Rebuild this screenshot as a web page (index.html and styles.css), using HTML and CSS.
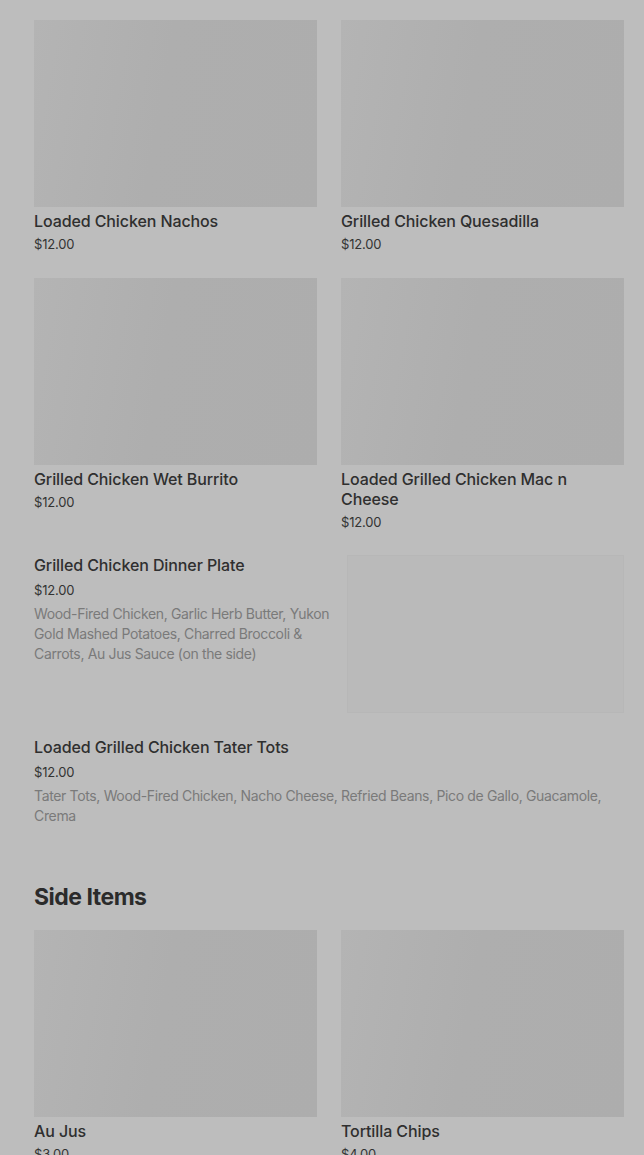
FILE: index.html
```html
<!DOCTYPE html>
<html lang="en">
<head>
    <meta charset="UTF-8">
    <meta name="viewport" content="width=device-width, initial-scale=1.0">
    <title>Menu</title>
    <link rel="stylesheet" href="styles.css">
</head>
<body>
    <div class="menu">
        <div class="grid">
            <div class="card">
                <div class="thumb"></div>
                <div class="item-name">Loaded Chicken Nachos</div>
                <div class="item-price">$12.00</div>
            </div>
            <div class="card">
                <div class="thumb"></div>
                <div class="item-name">Grilled Chicken Quesadilla</div>
                <div class="item-price">$12.00</div>
            </div>
            <div class="card">
                <div class="thumb"></div>
                <div class="item-name">Grilled Chicken Wet Burrito</div>
                <div class="item-price">$12.00</div>
            </div>
            <div class="card">
                <div class="thumb"></div>
                <div class="item-name">Loaded Grilled Chicken Mac n Cheese</div>
                <div class="item-price">$12.00</div>
            </div>
        </div>

        <div class="row-item">
            <div class="row-text">
                <div class="item-name">Grilled Chicken Dinner Plate</div>
                <div class="item-price spaced">$12.00</div>
                <div class="item-desc">Wood-Fired Chicken, Garlic Herb Butter, Yukon Gold Mashed Potatoes, Charred Broccoli &amp; Carrots, Au Jus Sauce (on the side)</div>
            </div>
            <div class="row-thumb"></div>
        </div>

        <div class="row-item">
            <div class="row-text">
                <div class="item-name">Loaded Grilled Chicken Tater Tots</div>
                <div class="item-price spaced">$12.00</div>
                <div class="item-desc">Tater Tots, Wood-Fired Chicken, Nacho Cheese, Refried Beans, Pico de Gallo, Guacamole, Crema</div>
            </div>
        </div>

        <h2 class="section-title">Side Items</h2>
        <div class="grid">
            <div class="card">
                <div class="thumb"></div>
                <div class="item-name">Au Jus</div>
                <div class="item-price">$3.00</div>
            </div>
            <div class="card">
                <div class="thumb"></div>
                <div class="item-name">Tortilla Chips</div>
                <div class="item-price">$4.00</div>
            </div>
        </div>
    </div>
</body>
</html>
```

FILE: styles.css
```css
body {
    margin: 0;
    background: #bdbdbd;
    font-family: Inter, "Noto Sans", sans-serif;
    color: #2e2e2e;
}
.menu {
    padding: 20px 20px 40px 34px;
}
.grid {
    display: grid;
    grid-template-columns: 1fr 1fr;
    column-gap: 24px;
    row-gap: 24px;
}
.thumb {
    height: 187px;
    background: linear-gradient(100deg, #b4b4b4, #aeaeae 45%, #adadad);
    margin-bottom: 4px;
}
.item-name {
    font-size: 16px;
    line-height: 20px;
    font-weight: 500;
    letter-spacing: -0.1px;
    color: #2f2f2f;
}
.item-price {
    font-size: 13px;
    line-height: 20px;
    margin-top: 3px;
    letter-spacing: -0.2px;
    color: #333;
}
.item-price.spaced {
    margin-top: 5px;
}
.item-desc {
    font-size: 14px;
    line-height: 20px;
    margin-top: 4px;
    letter-spacing: -0.35px;
    color: #7a7a7a;
}
.row-item {
    display: flex;
    gap: 12px;
    margin-top: 23px;
}
.row-item + .row-item {
    margin-top: 24px;
}
.row-text {
    flex: 1;
}
.row-thumb {
    width: 277px;
    height: 158px;
    flex-shrink: 0;
    background: #bababa;
    border: 1px solid #b7b7b7;
    box-sizing: border-box;
}
.section-title {
    margin: 55px 0 17px;
    font-size: 23px;
    line-height: 32px;
    font-weight: 700;
    letter-spacing: -0.5px;
    color: #2b2b2b;
}
```
